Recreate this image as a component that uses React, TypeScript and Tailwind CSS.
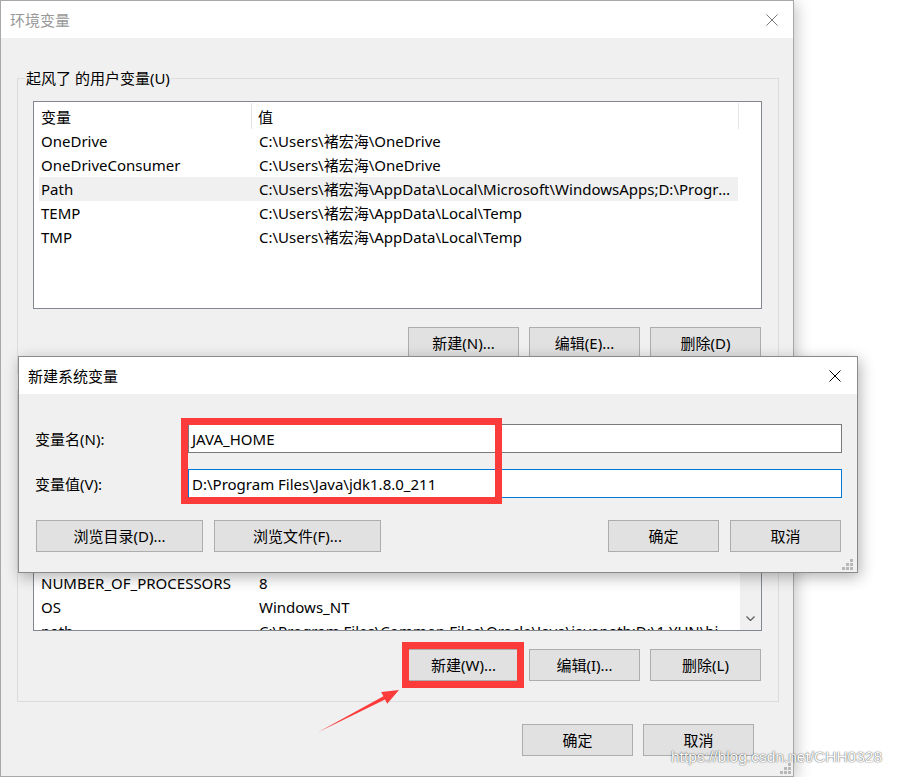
import type { ReactNode } from 'react';

type VarRow = { name: string; value: string };

const userVars: VarRow[] = [
  { name: 'OneDrive', value: 'C:\\Users\\褚宏海\\OneDrive' },
  { name: 'OneDriveConsumer', value: 'C:\\Users\\褚宏海\\OneDrive' },
  {
    name: 'Path',
    value:
      'C:\\Users\\褚宏海\\AppData\\Local\\Microsoft\\WindowsApps;D:\\Program Files\\Java\\jdk1.8.0_211\\bin',
  },
  { name: 'TEMP', value: 'C:\\Users\\褚宏海\\AppData\\Local\\Temp' },
  { name: 'TMP', value: 'C:\\Users\\褚宏海\\AppData\\Local\\Temp' },
];

const systemVars: VarRow[] = [
  { name: 'asl.log', value: 'Destination=file' },
  { name: 'ComSpec', value: 'C:\\Windows\\system32\\cmd.exe' },
  { name: 'DriverData', value: 'C:\\Windows\\System32\\Drivers\\DriverData' },
  { name: 'NUMBER_OF_PROCESSORS', value: '8' },
  { name: 'OS', value: 'Windows_NT' },
  {
    name: 'path',
    value: 'C:\\Program Files\\Common Files\\Oracle\\Java\\javapath;D:\\1 YUN\\bin;C:\\Windows\\system32',
  },
];

function CloseIcon({ color }: { color: string }) {
  return (
    <svg width="12" height="12" viewBox="0 0 12 12">
      <path d="M0.5 0.5L11.5 11.5M11.5 0.5L0.5 11.5" stroke={color} strokeWidth="1" />
    </svg>
  );
}

function Grip({ className }: { className: string }) {
  return (
    <svg className={className} width="11" height="11" viewBox="0 0 11 11" fill="#b8b8b8">
      <rect x="8" y="0" width="3" height="3" />
      <rect x="4" y="4" width="3" height="3" />
      <rect x="8" y="4" width="3" height="3" />
      <rect x="0" y="8" width="3" height="3" />
      <rect x="4" y="8" width="3" height="3" />
      <rect x="8" y="8" width="3" height="3" />
    </svg>
  );
}

function WinButton({ label, className = 'w-[111px]' }: { label: string; className?: string }) {
  return (
    <button
      type="button"
      className={`flex h-[32px] shrink-0 items-center justify-center border border-[#adadad] bg-[#e1e1e1] text-[15px] leading-[20px] text-black ${className}`}
    >
      {label}
    </button>
  );
}

function ListHeader() {
  return (
    <div className="flex h-[27px] shrink-0">
      <div className="mt-[1px] flex w-[213px] items-center border-r border-[#e5e5e5] pl-[2px] pt-[1px] leading-[20px]">
        变量
      </div>
      <div className="mt-[1px] flex w-[487px] items-center border-r border-[#e5e5e5] pl-[6px] pt-[1px] leading-[20px]">
        值
      </div>
    </div>
  );
}

function Row({ row, active, className = '' }: { row: VarRow; active?: boolean; className?: string }) {
  return (
    <div
      className={`flex h-[24px] w-[699px] shrink-0 items-center leading-[24px] ${active ? 'bg-[#f0f0f0]' : ''} ${className}`}
    >
      <div className="w-[213px] shrink-0 truncate pl-[2px]">{row.name}</div>
      <div className="min-w-0 flex-1 truncate pl-[7px]">{row.value}</div>
    </div>
  );
}

function GroupBox({ title, className, children }: { title: string; className: string; children: ReactNode }) {
  return (
    <div className={`relative w-[762px] border border-[#dcdcdc] pl-[15px] pt-[22px] ${className}`}>
      <span className="absolute -top-[11px] left-[7px] bg-[#f0f0f0] px-[1px] leading-[20px]">{title}</span>
      {children}
    </div>
  );
}

function ButtonRow({ labels }: { labels: string[] }) {
  return (
    <div className="mt-[18px] flex w-[729px] justify-end gap-[10px] pr-[1px]">
      {labels.map((l) => (
        <WinButton key={l} label={l} />
      ))}
    </div>
  );
}

function OuterWindow() {
  return (
    <div className="relative flex h-[777px] w-[794px] flex-col border border-[#a8a8a8] bg-[#f0f0f0] shadow-[3px_3px_14px_rgba(0,0,0,0.22)]">
      <div className="flex h-[37px] shrink-0 items-center justify-between bg-white pl-[9px] pr-[15px]">
        <span className="leading-[20px] text-[#999999]">环境变量</span>
        <CloseIcon color="#7a7a7a" />
      </div>

      <div className="flex flex-col px-[16px]">
        <GroupBox title="起风了 的用户变量(U)" className="mt-[40px] pb-[13px]">
          <div className="h-[208px] w-[729px] border border-[#828790] bg-white pl-[5px]">
            <ListHeader />
            {userVars.map((r, i) => (
              <Row key={r.name} row={r} active={i === 2} />
            ))}
          </div>
          <ButtonRow labels={['新建(N)...', '编辑(E)...', '删除(D)']} />
        </GroupBox>

        <GroupBox title="系统变量(S)" className="mt-[17px] pb-[20px]">
          <div className="flex h-[218px] w-[729px] border border-[#828790] bg-white">
            <div className="flex min-w-0 flex-1 flex-col overflow-hidden pl-[5px]">
              <ListHeader />
              <div className="flex min-h-0 flex-1 flex-col justify-end overflow-hidden">
                {systemVars.map((r, i) => (
                  <Row key={r.name} row={r} className={i === systemVars.length - 1 ? '-mb-[13px]' : ''} />
                ))}
              </div>
            </div>
            <div className="flex w-[21px] shrink-0 flex-col items-center justify-end bg-[#f0f0f0] pb-[9px]">
              <svg width="9" height="5" viewBox="0 0 9 5">
                <path d="M0.5 0.5L4.5 4.5L8.5 0.5" fill="none" stroke="#606060" strokeWidth="1.3" />
              </svg>
            </div>
          </div>
          <ButtonRow labels={['新建(W)...', '编辑(I)...', '删除(L)']} />
        </GroupBox>

        <div className="mt-[22px] flex w-[762px] justify-end gap-[10px] pr-[25px]">
          <WinButton label="确定" />
          <WinButton label="取消" />
        </div>
      </div>

      <Grip className="absolute bottom-[2px] right-[2px]" />
    </div>
  );
}

function Field({ label, value, focused, className = '' }: { label: string; value: string; focused?: boolean; className?: string }) {
  return (
    <div className={`flex items-center ${className}`}>
      <span className="w-[153px] shrink-0 leading-[20px]">{label}</span>
      <div
        className={`flex h-[29px] flex-1 items-center border bg-white px-[3px] leading-[20px] ${focused ? 'border-[#0078d7]' : 'border-[#7a7a7a]'}`}
      >
        {value}
      </div>
    </div>
  );
}

function NewVarDialog() {
  return (
    <div className="absolute left-[18px] top-[356px] flex h-[217px] w-[840px] flex-col border border-[#8a8a8a] bg-[#f0f0f0] shadow-[2px_4px_14px_rgba(0,0,0,0.3)]">
      <div className="flex h-[37px] shrink-0 items-center justify-between bg-white pl-[9px] pr-[16px]">
        <span className="leading-[20px]">新建系统变量</span>
        <CloseIcon color="#000000" />
      </div>
      <div className="flex flex-col pl-[16px] pr-[15px] pt-[30px]">
        <Field label="变量名(N):" value="JAVA_HOME" />
        <Field label="变量值(V):" value="D:\Program Files\Java\jdk1.8.0_211" focused className="mt-[16px]" />
        <div className="mt-[22px] flex gap-[11px] px-[1px]">
          <WinButton label="浏览目录(D)..." className="w-[167px]" />
          <WinButton label="浏览文件(F)..." className="w-[167px]" />
          <div className="flex-1" />
          <WinButton label="确定" />
          <WinButton label="取消" />
        </div>
      </div>
      <Grip className="absolute bottom-[2px] right-[4px]" />
    </div>
  );
}

export default function App() {
  return (
    <div className="relative h-[777px] w-[897px] overflow-hidden bg-white text-[15px] text-black [font-family:'Noto_Sans','Noto_Sans_CJK_SC',sans-serif]">
      <OuterWindow />
      <NewVarDialog />

      {/* red annotations */}
      <div className="absolute left-[181px] top-[418px] h-[86px] w-[321px] border-[7px] border-[#fc3b3b]" />
      <div className="absolute left-[402px] top-[642px] h-[46px] w-[122px] border-[7px] border-[#fc3b3b]" />
      <svg className="pointer-events-none absolute left-0 top-0" width="897" height="777">
        <polygon
          points="399,690 381.2,691.9 383.4,696.2 318,732.3 385,699.4 387.2,703.7"
          fill="#fc3b3b"
        />
      </svg>

      <div className="pointer-events-none absolute left-[671px] top-[747px] text-[15.5px] leading-[20px] text-white [font-family:'Liberation_Sans',Arial,sans-serif] [text-shadow:0_0_1px_rgba(0,0,0,0.7),0_0_2px_rgba(0,0,0,0.35)]">
        https://blog.csdn.net/CHH0328
      </div>
    </div>
  );
}
